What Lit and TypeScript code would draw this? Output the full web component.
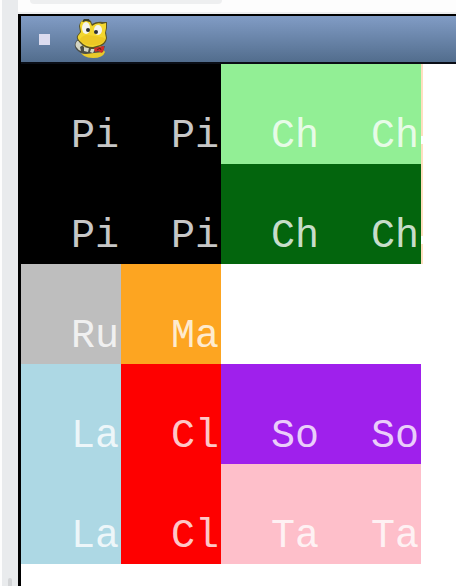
import { LitElement, html, css } from "lit";
import { customElement } from "lit/decorators.js";
import { classMap } from "lit/directives/class-map.js";

interface Cell {
  label: string;
  tone: string;
  edge?: boolean;
}

const cells: (Cell | null)[] = [
  { label: "Pi", tone: "black" },
  { label: "Pi", tone: "black" },
  { label: "Ch", tone: "lightgreen" },
  { label: "Ch", tone: "lightgreen", edge: true },
  { label: "Pi", tone: "black" },
  { label: "Pi", tone: "black" },
  { label: "Ch", tone: "darkgreen" },
  { label: "Ch", tone: "darkgreen", edge: true },
  { label: "Ru", tone: "gray" },
  { label: "Ma", tone: "orange" },
  null,
  null,
  { label: "La", tone: "lightblue" },
  { label: "Cl", tone: "red" },
  { label: "So", tone: "purple" },
  { label: "So", tone: "purple" },
  { label: "La", tone: "lightblue" },
  { label: "Cl", tone: "red" },
  { label: "Ta", tone: "pink" },
  { label: "Ta", tone: "pink" },
];

@customElement("snake-icon")
export class SnakeIcon extends LitElement {
  static styles = css`
    :host { display: block; width: 36px; height: 42px; }
    svg { display: block; width: 100%; height: 100%; }
  `;

  render() {
    return html`
      <svg viewBox="0 0 36 42" aria-hidden="true">
        <path d="M6 32q2 8 13 8 10 0 12-6l-4-6-18 0z" fill="#e9c92b"/>
        <path d="M3 22q-4 4-1 9 4 5 10 5l8-1 9-1 2-6-12 2-9-1z" fill="#4a4d47"/>
        <path d="M3 23q-3 4 0 7 2 3 4 3l-1-4 3-2-3-4zM10 29l5 1-1 4-4-1zM17 31h4l-2 4-3-1z" fill="#d3d5c4"/>
        <path d="M8 3q4-4 9 0l1 3q5-3 11-2l4 0 0 6-1 4 1 6q-1 6-6 8l-8 3q-9-1-13-6-4-3-3-7l3-4-1-6q0-3 3-5z" fill="#5b5423"/>
        <path d="M9 4q4-3 7 0l2 4q5-4 10-2l4-1 0 5-1 5 1 5q-1 5-6 7l-7 2q-8 0-12-5-4-3-3-6l3-4-1-6q0-4 3-6z" fill="#f3d72f"/>
        <path d="M6 21q3-4 8-4l7 1 6 1q5 1 4 3-3 4-9 5-6 1-11-1-5-2-5-5z" fill="#edc824"/>
        <ellipse cx="12" cy="10" rx="4" ry="6" fill="#f5f5ef"/>
        <ellipse cx="24" cy="12" rx="4" ry="5" fill="#f5f5ef"/>
        <circle cx="14" cy="12" r="2" fill="#2b2d31"/>
        <circle cx="22" cy="14" r="2" fill="#2b2d31"/>
        <path d="M8 4l2-3 5 0 1 3-4-1z" fill="#3b3e2c"/>
        <path d="M20 30l10-2 0 3-2 4-4-2-3 1z" fill="#cf2c28"/>
        <path d="M23 32l3-2 1 2" fill="none" stroke="#571f1c" stroke-width="1"/>
      </svg>`;
  }
}

@customElement("app-root")
export class AppRoot extends LitElement {
  static styles = css`
    :host {
      display: flex;
      flex-direction: column;
      min-height: 100vh;
      box-sizing: border-box;
      background: #fdfdfd;
      overflow: hidden;
    }
    .page { display: flex; flex: 1; }
    .gutter {
      flex: none;
      width: 16px;
      box-sizing: border-box;
      margin-left: 2px;
      background: #e9ebed;
      display: flex;
      flex-direction: column;
      justify-content: flex-end;
      align-items: center;
    }
    .thumb { width: 4px; height: 8px; border-radius: 2px 2px 0 0; background: #d2d4d6; }
    .main { flex: 1; min-width: 0; display: flex; flex-direction: column; }
    .strip { height: 14px; box-sizing: border-box; border-bottom: 2px solid #eeeff0; padding: 0 12px; }
    .pill { width: 192px; height: 4px; border-radius: 0 0 12px 12px; background: #eeeff0; }
    .window {
      flex: 1;
      background: #ffffff;
      border-left: 3px solid #000000;
      border-top: 2px solid #000000;
    }
    .titlebar {
      height: 48px;
      box-sizing: border-box;
      border-bottom: 2px solid #0a0e16;
      background: linear-gradient(#819cc5, #526d8d);
      display: flex;
      align-items: center;
      gap: 24px;
      padding-left: 18px;
    }
    .menu {
      width: 11px;
      height: 11px;
      padding: 0;
      border: 0;
      background: #dcdcef;
    }
    .grid {
      display: grid;
      grid-template-columns: repeat(4, 100px);
      grid-auto-rows: 100px;
    }
    .cell {
      position: relative;
      box-sizing: border-box;
      padding: 48px 0 0 50px;
      font: 40px/50px "Courier New", "Liberation Mono", monospace;
      color: rgba(255, 255, 255, 0.8);
      white-space: nowrap;
    }
    .edge::after {
      content: "";
      position: absolute;
      top: 0;
      bottom: 0;
      left: 100%;
      width: 2px;
      background: linear-gradient(#ffdfc0 72px, #ffffff 72px 80px, #ffdfc0 80px);
    }
    .black { background: #000000; }
    .lightgreen { background: #92ef95; }
    .darkgreen { background: #03650d; }
    .gray { background: #bebebe; }
    .orange { background: #fda521; }
    .lightblue { background: #add8e4; }
    .red { background: #fe0000; }
    .purple { background: #9f20ec; }
    .pink { background: #febfca; }
  `;

  private renderCell(cell: Cell | null) {
    if (!cell) return html`<div></div>`;
    const classes = { cell: true, [cell.tone]: true, edge: Boolean(cell.edge) };
    return html`<div class=${classMap(classes)}>${cell.label}</div>`;
  }

  render() {
    return html`
      <div class="page">
        <div class="gutter"><div class="thumb"></div></div>
        <div class="main">
          <div class="strip"><div class="pill"></div></div>
          <div class="window">
            <header class="titlebar">
              <button class="menu" aria-label="Window menu"></button>
              <snake-icon></snake-icon>
            </header>
            <main class="grid">${cells.map((cell) => this.renderCell(cell))}</main>
          </div>
        </div>
      </div>`;
  }
}
